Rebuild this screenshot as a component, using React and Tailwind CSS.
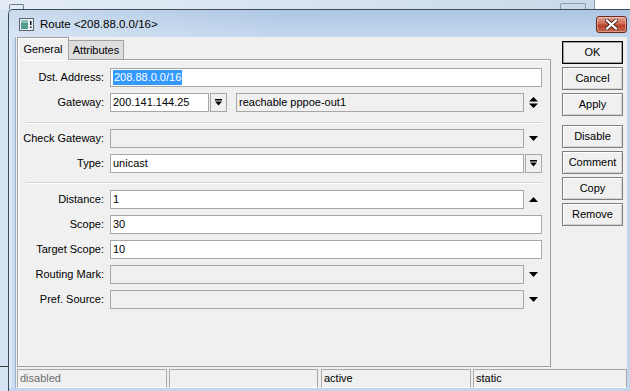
import clsx from "clsx";

const FONT = "font-['Liberation_Sans',Arial,sans-serif]";

function DownTri() {
    return (
        <svg width="9" height="5" viewBox="0 0 9 5">
            <path d="M0 0H9L4.5 5Z" fill="#000" />
        </svg>
    );
}

function UpTri() {
    return (
        <svg width="9" height="5" viewBox="0 0 9 5">
            <path d="M0 5H9L4.5 0Z" fill="#000" />
        </svg>
    );
}

function UpDown() {
    return (
        <svg width="9" height="11" viewBox="0 0 9 11">
            <path d="M0 4.5H9L4.5 0Z M0 6.5H9L4.5 11Z" fill="#000" />
        </svg>
    );
}

function BarDown() {
    return (
        <svg width="7" height="7" viewBox="0 0 7 7">
            <rect x="0" y="0" width="7" height="1.5" fill="#000" />
            <path d="M0 2.5H7L3.5 6.5Z" fill="#000" />
        </svg>
    );
}

function Box({children, disabled, className}) {
    return (
        <div className={clsx(
            "flex items-center border border-[#a7a7a7] pl-[2px] text-[11px] text-black",
            disabled ? "bg-[#f0f0f0]" : "bg-white",
            className
        )}>
            {children}
        </div>
    );
}

function Arrow({children}) {
    return <div className="flex w-[18px] shrink-0 items-center justify-center">{children}</div>;
}

function DropBtn() {
    return (
        <div className="flex w-[17px] shrink-0 items-center justify-center border border-[#a7a7a7] bg-[#f0f0f0]">
            <BarDown />
        </div>
    );
}

function Row({label, children}) {
    return (
        <div className="flex h-[19px] items-center">
            <div className="w-[86px] shrink-0 text-right text-[11px] text-black">{label}</div>
            <div className="ml-[6px] flex h-full flex-1">{children}</div>
        </div>
    );
}

function Sep({className}) {
    return <div className={clsx("ml-[8px] border-t border-b border-t-[#d6d6d6] border-b-white", className)} />;
}

function Btn({children, def}) {
    return (
        <div className={clsx(
            "flex h-[23px] items-center justify-center bg-[#f0f0f0] text-[11px] text-black",
            def ? "border border-black shadow-[inset_0_0_0_1px_#a0a0a0]"
                : "border border-[#7f7f7f] shadow-[inset_1px_1px_0_#ffffff,inset_-1px_-1px_0_#d4d4d4]"
        )}>
            {children}
        </div>
    );
}

function StatusCell({w, children, muted}) {
    return (
        <div className={clsx(
            "flex items-center border border-[#a8a8a8] border-b-white pl-[2px] text-[11px]",
            muted ? "text-[#6d6d6d]" : "text-black",
            w
        )}>
            {children}
        </div>
    );
}

function WinIcon() {
    return (
        <svg width="15" height="13" viewBox="0 0 15 13">
            <rect x="0.5" y="0.5" width="14" height="12" fill="#e8eef2" stroke="#5a6570" />
            <rect x="2" y="2" width="7" height="9" fill="#4f9a8c" />
            <rect x="2" y="2" width="7" height="3" fill="#8cc3b6" />
            <rect x="11" y="3" width="1.5" height="4" fill="#111" />
            <rect x="11" y="8.5" width="1.5" height="1.5" fill="#111" />
        </svg>
    );
}

function CloseBtn() {
    return (
        <div className="flex h-[17px] w-[31px] items-center justify-center rounded-[3px] border border-[#6e2a1f] bg-[linear-gradient(180deg,#e0a392_0%,#cf6a52_45%,#b9412a_55%,#c8654c_100%)] shadow-[inset_0_0_0_1px_rgba(255,255,255,0.35)]">
            <svg width="13" height="11" viewBox="0 0 13 11">
                <path d="M2 1.5L11 9.5M11 1.5L2 9.5" stroke="#4a2a25" strokeWidth="4" strokeLinecap="square" />
                <path d="M2 1.5L11 9.5M11 1.5L2 9.5" stroke="#ffffff" strokeWidth="2.2" strokeLinecap="square" />
            </svg>
        </div>
    );
}

export default function App() {
    return (
        <div className={clsx("flex h-[391px] w-[630px] flex-col overflow-hidden bg-[#dbe7f4]", FONT)}>
            {/* window behind */}
            <div className="flex h-[9px] shrink-0 bg-[linear-gradient(90deg,#e4edf7,#c9d8e9)]">
                <div className="ml-[9px] mt-[4px] h-[5px] w-[15px] rounded-t-[2px] border border-b-0 border-[#6f7c8a]" />
                <div className="flex-1" />
                <div className="mt-[3px] h-[6px] w-[26px] rounded-t-[2px] border border-b-0 border-[#8b9cb0]" />
                <div className="ml-[8px] w-px bg-[#8c99a8]" />
                <div className="w-[35px] bg-white" />
            </div>

            <div className="flex flex-1">
                <div className="flex w-[8px] shrink-0 flex-col">
                    <div className="flex-1 bg-[#d6e4f3]" />
                    <div className="h-px bg-[#3c3c3c]" />
                    <div className="h-[24px] bg-[#d6e4f3]" />
                </div>

                <div className="flex flex-1 flex-col rounded-tl-[5px] border-l border-t border-[#3d4a5a] bg-[#c4d7ed]">
                    {/* title bar */}
                    <div className="flex h-[27px] shrink-0 items-center rounded-tl-[4px] bg-[linear-gradient(90deg,rgba(255,255,255,0.35)_0%,rgba(255,255,255,0)_45%),linear-gradient(180deg,#adc6e3_0%,#c3d7ee_100%)] pl-[10px] pr-[3px] pt-[2px]">
                        <WinIcon />
                        <div className="ml-[6px] text-[11.5px] text-black">Route &lt;208.88.0.0/16&gt;</div>
                        <div className="flex-1" />
                        <CloseBtn />
                    </div>

                    <div className="flex flex-1">
                        <div className="w-[6px] shrink-0 bg-[linear-gradient(90deg,#e2ecf7,#c6d8ee)]" />
                        <div className="w-px shrink-0 bg-[#9fb4cc]" />

                        {/* client */}
                        <div className="flex w-[611px] shrink-0 flex-col bg-[#f0f0f0]">
                            <div className="flex h-[330px]">
                                <div className="ml-px flex w-[534px] flex-col">
                                    <div className="flex h-[22px] items-end">
                                        <div className="relative z-10 -mb-px flex h-[23px] w-[52px] items-center justify-center border border-b-0 border-[#a0a0a0] bg-[#f0f0f0] text-[11px] text-black shadow-[inset_1px_1px_0_#ffffff]">
                                            General
                                        </div>
                                        <div className="flex h-[19px] w-[55px] items-center justify-center border border-b-0 border-l-0 border-[#a0a0a0] bg-[#dedede] text-[11px] text-black">
                                            Attributes
                                        </div>
                                    </div>

                                    <div className="flex flex-1 flex-col border border-[#a0a0a0] bg-[#f0f0f0] pr-[8px] pt-[8px] shadow-[inset_1px_1px_0_#ffffff]">
                                        <div className="flex flex-col gap-[6px]">
                                            <Row label="Dst. Address:">
                                                <Box className="flex-1">
                                                    <span className="bg-[#3399ff] px-px leading-[15px] text-white">208.88.0.0/16</span>
                                                </Box>
                                            </Row>
                                            <Row label="Gateway:">
                                                <Box className="w-[99px] shrink-0">200.141.144.25</Box>
                                                <div className="ml-px flex">
                                                    <DropBtn />
                                                </div>
                                                <Box disabled className="ml-[9px] flex-1">reachable pppoe-out1</Box>
                                                <Arrow><UpDown /></Arrow>
                                            </Row>
                                        </div>

                                        <Sep className="mb-[5px] mt-[10px]" />

                                        <div className="flex flex-col gap-[6px]">
                                            <Row label="Check Gateway:">
                                                <Box disabled className="flex-1" />
                                                <Arrow><DownTri /></Arrow>
                                            </Row>
                                            <Row label="Type:">
                                                <Box className="flex-1">unicast</Box>
                                                <div className="ml-px flex">
                                                    <DropBtn />
                                                </div>
                                            </Row>
                                        </div>

                                        <Sep className="mb-[6px] mt-[9px]" />

                                        <div className="flex flex-col gap-[6px]">
                                            <Row label="Distance:">
                                                <Box className="flex-1">1</Box>
                                                <Arrow><UpTri /></Arrow>
                                            </Row>
                                            <Row label="Scope:">
                                                <Box className="flex-1">30</Box>
                                            </Row>
                                            <Row label="Target Scope:">
                                                <Box className="flex-1">10</Box>
                                            </Row>
                                            <Row label="Routing Mark:">
                                                <Box disabled className="flex-1" />
                                                <Arrow><DownTri /></Arrow>
                                            </Row>
                                            <Row label="Pref. Source:">
                                                <Box disabled className="flex-1" />
                                                <Arrow><DownTri /></Arrow>
                                            </Row>
                                        </div>
                                    </div>
                                </div>

                                <div className="ml-[11px] flex w-[61px] flex-col pt-[4px]">
                                    <div className="flex flex-col gap-[3px]">
                                        <Btn def>OK</Btn>
                                        <Btn>Cancel</Btn>
                                        <Btn>Apply</Btn>
                                    </div>
                                    <div className="mt-[9px] flex flex-col gap-[3px]">
                                        <Btn>Disable</Btn>
                                        <Btn>Comment</Btn>
                                        <Btn>Copy</Btn>
                                        <Btn>Remove</Btn>
                                    </div>
                                </div>
                            </div>

                            <div className="ml-px mt-[2px] flex h-[19px]">
                                <StatusCell w="w-[150px]" muted>disabled</StatusCell>
                                <StatusCell w="ml-[2px] w-[149px]" />
                                <StatusCell w="ml-[3px] w-[150px]">active</StatusCell>
                                <StatusCell w="ml-[2px] w-[154px]">static</StatusCell>
                            </div>
                        </div>

                        <div className="flex-1 bg-[#c2d5ec]" />
                    </div>

                    <div className="h-[3px] shrink-0 bg-[#c2d5ec]" />
                </div>
            </div>
        </div>
    );
}
